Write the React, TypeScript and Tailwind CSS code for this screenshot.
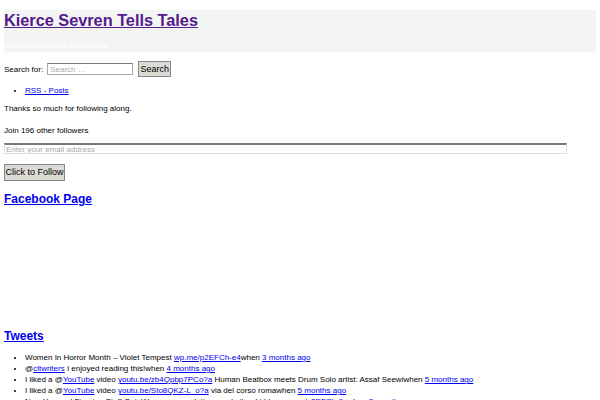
export default function App() {
  const tweets: { parts: { t: string; link?: boolean }[] }[] = [
    {
      parts: [
        { t: 'Women In Horror Month – Violet Tempest ' },
        { t: 'wp.me/p2EFCh-e4', link: true },
        { t: 'when ' },
        { t: '3 months ago', link: true },
      ],
    },
    {
      parts: [
        { t: '@' },
        { t: 'cltwriters', link: true },
        { t: ' I enjoyed reading this!when ' },
        { t: '4 months ago', link: true },
      ],
    },
    {
      parts: [
        { t: 'I liked a @' },
        { t: 'YouTube', link: true },
        { t: ' video ' },
        { t: 'youtu.be/zb4Qpbp7PCo?a', link: true },
        { t: ' Human Beatbox meets Drum Solo artist: Assaf Seewiwhen ' },
        { t: '5 months ago', link: true },
      ],
    },
    {
      parts: [
        { t: 'I liked a @' },
        { t: 'YouTube', link: true },
        { t: ' video ' },
        { t: 'youtu.be/Sto8QKZ-L_o?a', link: true },
        { t: ' via del corso romawhen ' },
        { t: '5 months ago', link: true },
      ],
    },
    {
      parts: [
        { t: 'Now You and Fie-ning Stuff Out: We pour our relatives and other kiddos ' },
        { t: 'wp.me/p2EFCh-9u', link: true },
        { t: 'when ' },
        { t: '5 months ago', link: true },
      ],
    },
  ];

  return (
    <div className="min-h-[400px] bg-white px-1 pt-[10px] font-['Liberation_Sans',Arial,sans-serif] text-[8px] leading-[11px] text-black">
      {/* Header */}
      <header className="bg-[#f3f4f4] pb-[1px]">
        <h1 className="text-[16.3px] font-bold leading-[20px]">
          <a href="#" className="text-[#551a8b] underline">Kierce Sevren Tells Tales</a>
        </h1>
        <p className="mt-[11px] text-[7px] leading-[10px] text-white">some of these might even be true</p>
      </header>

      {/* Search */}
      <form className="mt-[9px] flex h-[16px] items-center">
        <label className="mr-[4px]">Search for:</label>
        <input
          type="text"
          placeholder="Search …"
          className="h-[12px] w-[86px] border border-[#aaa] border-t-[#777] px-[2px] text-[8px] placeholder:text-[#aaa]"
        />
        <button type="button" className="ml-[5px] h-[16px] w-[33px] border border-[#888] bg-[#dcdad5] text-[9px] leading-[14px] text-black">
          Search
        </button>
      </form>

      {/* RSS */}
      <ul className="mt-[8px] list-disc pl-[21px]">
        <li>
          <a href="#" className="text-[#0000ee] underline">RSS - Posts</a>
        </li>
      </ul>

      <p className="mt-[7px]">Thanks so much for following along.</p>

      <p className="mt-[11px]">Join 196 other followers</p>

      <input
        type="text"
        placeholder="Enter your email address"
        className="mt-[7px] block h-[11px] w-[563px] border border-[#ddd] border-t-2 border-t-[#777] px-[1px] text-[8px] leading-[9px] placeholder:text-[#aaa]"
      />

      <button type="button" className="mt-[10px] block h-[17px] w-[61px] border border-[#888] bg-[#dcdad5] text-[9px] leading-[15px] text-black">
        Click to Follow
      </button>

      <h2 className="mt-[10px] text-[12px] font-bold leading-[16px]">
        <a href="#" className="text-[#0000ee] underline">Facebook Page</a>
      </h2>

      {/* facebook iframe placeholder */}
      <div className="h-[121px]" />

      <h2 className="text-[12px] font-bold leading-[16px]">
        <a href="#" className="text-[#0000ee] underline">Tweets</a>
      </h2>

      <ul className="mt-[8px] list-disc pl-[21px]">
        {tweets.map((tw, i) => (
          <li key={i} className="whitespace-nowrap">
            {tw.parts.map((p, j) =>
              p.link ? (
                <a key={j} href="#" className="text-[#0000ee] underline">
                  {p.t}
                </a>
              ) : (
                <span key={j}>{p.t}</span>
              )
            )}
          </li>
        ))}
      </ul>
    </div>
  );
}
